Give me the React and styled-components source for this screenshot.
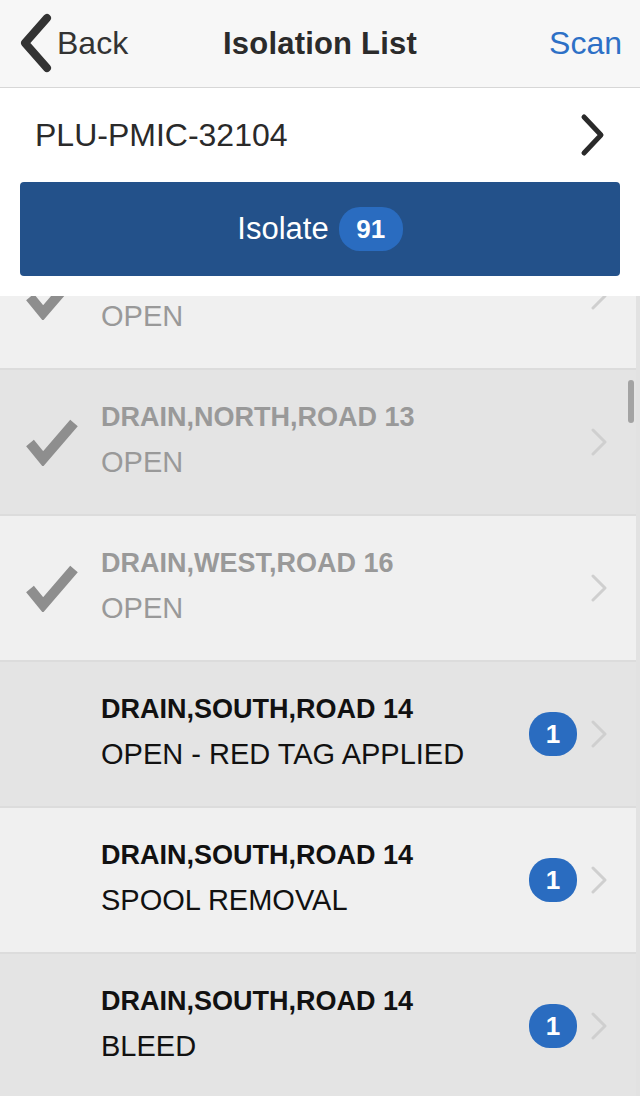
import styled, { createGlobalStyle } from "styled-components";

const GlobalStyle = createGlobalStyle`
  html, body {
    margin: 0;
    padding: 0;
    background: #ffffff;
    overflow: hidden;
  }
  * {
    box-sizing: border-box;
  }
`

const Screen = styled.div`
  width: 640px;
  height: 1096px;
  display: flex;
  flex-direction: column;
  overflow: hidden;
  font-family: "Liberation Sans", Arial, sans-serif;
  background: #ffffff;
`
const NavBar = styled.header`
  flex: none;
  height: 88px;
  display: grid;
  grid-template-columns: 1fr auto 1fr;
  align-items: center;
  padding: 0 18px;
  background: #f7f7f7;
  border-bottom: 1px solid #d7d7d7;
`
const BackButton = styled.button`
  justify-self: start;
  display: flex;
  align-items: center;
  gap: 3px;
  padding: 0;
  margin-top: -1px;
  background: none;
  border: none;
  font-family: inherit;
  font-size: 32px;
  color: #333333;
  cursor: pointer;
`
const Title = styled.h1`
  margin: 0;
  font-size: 31px;
  font-weight: 700;
  color: #2b2b2b;
  letter-spacing: 0.2px;
`
const ScanButton = styled.button`
  justify-self: end;
  padding: 0;
  background: none;
  border: none;
  font-family: inherit;
  font-size: 32px;
  color: #2d70c6;
  cursor: pointer;
`
const Summary = styled.section`
  flex: none;
  display: flex;
  flex-direction: column;
  padding: 0 20px 20px;
  background: #ffffff;
`
const PermitRow = styled.div`
  height: 94px;
  display: flex;
  align-items: center;
  justify-content: space-between;
  padding: 0 14px 0 15px;
  font-size: 32px;
  color: #2a2a2a;
`
const IsolateButton = styled.button`
  height: 94px;
  display: flex;
  align-items: center;
  justify-content: center;
  gap: 10px;
  border: none;
  border-radius: 4px;
  background: #23518a;
  color: #ffffff;
  font-family: inherit;
  font-size: 31px;
  cursor: pointer;
`
const Count = styled.span`
  display: inline-flex;
  align-items: center;
  justify-content: center;
  min-width: ${(p) => (p.$small ? "48px" : "64px")};
  height: 44px;
  padding: 0 12px;
  border-radius: 21px;
  background: #2a6cc0;
  color: #ffffff;
  font-size: 26px;
  font-weight: 700;
`
const ListViewport = styled.div`
  position: relative;
  flex: 1;
  overflow: hidden;
  border-right: 4px solid #e2e2e2;
`
const ListInner = styled.ul`
  list-style: none;
  margin: -72px 0 0;
  padding: 0;
`
const Row = styled.li`
  height: 146px;
  display: flex;
  align-items: center;
  padding-right: 29px;
  background: ${(p) => (p.$dark ? "#e4e4e4" : "#f0f0f0")};
  border-bottom: 2px solid #dcdcdc;
`
const CheckCell = styled.div`
  flex: none;
  width: 101px;
  padding-left: 24px;
  display: flex;
  align-items: center;
`
const TextBlock = styled.div`
  flex: 1;
  align-self: flex-start;
  padding-top: 24px;
  color: ${(p) => (p.$done ? "#999999" : "#111111")};
`
const Name = styled.div`
  font-size: 27px;
  font-weight: 700;
  line-height: 46px;
  white-space: nowrap;
`
const Status = styled.div`
  font-size: 29px;
  line-height: 44px;
  white-space: nowrap;
`
const Trailing = styled.div`
  display: flex;
  align-items: center;
  gap: 14px;
`
const ScrollThumb = styled.div`
  position: absolute;
  top: 84px;
  right: 2px;
  width: 6px;
  height: 43px;
  border-radius: 3px;
  background: #a3a3a3;
`

function BackChevron() {
  return (
    <svg width="36" height="60" viewBox="0 0 36 60">
      <polyline points="29,5 7,30 29,55" fill="none" stroke="#333" strokeWidth="8" strokeLinecap="round" strokeLinejoin="round" />
    </svg>
  );
}

function Chevron({ light }) {
  if (light) {
    return (
      <svg width="16" height="28" viewBox="0 0 16 28">
        <polyline points="2,2 14,14 2,26" fill="none" stroke="#cfcfcf" strokeWidth="3" strokeLinecap="round" strokeLinejoin="round" />
      </svg>
    );
  }
  return (
    <svg width="26" height="44" viewBox="0 0 26 44">
      <polyline points="4,4 21,22 4,40" fill="none" stroke="#2a2a2a" strokeWidth="5" strokeLinecap="round" strokeLinejoin="round" />
    </svg>
  );
}

function CheckMark() {
  return (
    <svg width="54" height="48" viewBox="0 0 54 48">
      <polyline points="6,25 19,41 50,5" fill="none" stroke="#8e8e8e" strokeWidth="10" strokeLinejoin="miter" />
    </svg>
  );
}

// first row is scrolled up under the summary, only its status line shows
const isolations = [
  { status: "OPEN", done: true },
  { name: "DRAIN,NORTH,ROAD 13", status: "OPEN", done: true },
  { name: "DRAIN,WEST,ROAD 16", status: "OPEN", done: true },
  { name: "DRAIN,SOUTH,ROAD 14", status: "OPEN - RED TAG APPLIED", count: 1 },
  { name: "DRAIN,SOUTH,ROAD 14", status: "SPOOL REMOVAL", count: 1 },
  { name: "DRAIN,SOUTH,ROAD 14", status: "BLEED", count: 1 },
];

export default function App() {
  return (
    <>
      <GlobalStyle />
      <Screen>
        <NavBar>
          <BackButton>
            <BackChevron />
            Back
          </BackButton>
          <Title>Isolation List</Title>
          <ScanButton>Scan</ScanButton>
        </NavBar>

        <Summary>
          <PermitRow>
            <span>PLU-PMIC-32104</span>
            <Chevron />
          </PermitRow>
          <IsolateButton>
            Isolate <Count>91</Count>
          </IsolateButton>
        </Summary>

        <ListViewport>
          <ListInner>
            {isolations.map((item, i) => (
              <Row key={i} $dark={i % 2 === 1}>
                <CheckCell>{item.done && <CheckMark />}</CheckCell>
                <TextBlock $done={item.done}>
                  <Name>{item.name || "\u00a0"}</Name>
                  <Status>{item.status}</Status>
                </TextBlock>
                <Trailing>
                  {item.count && <Count $small>{item.count}</Count>}
                  <Chevron light />
                </Trailing>
              </Row>
            ))}
          </ListInner>
          <ScrollThumb />
        </ListViewport>
      </Screen>
    </>
  );
}
